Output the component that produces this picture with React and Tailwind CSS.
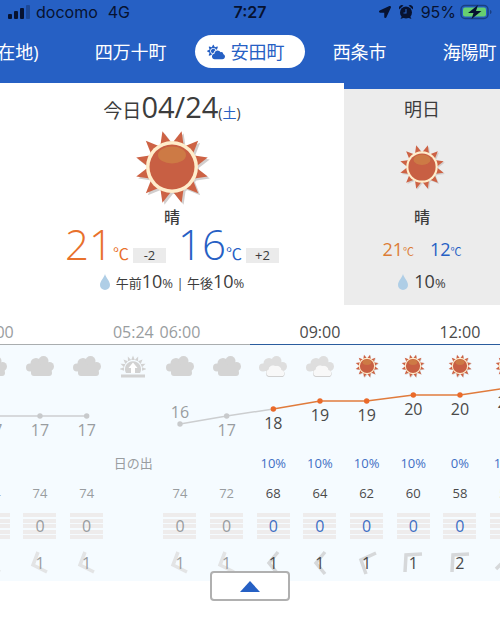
import { FaLocationArrow, FaCloudSun } from 'react-icons/fa';

const WIND = {
  nne: '13,4 8,17 22,24',
  w: '20,4 11,15 20,26',
  wnw: '24,5 9,12 14,26',
  nw: '24,6 8,7 7,24',
  n: '4,21 15,10 26,21',
};

const hours = [
  { time: '03:00', icon: 'cloud', temp: 17, y: 29, humidity: 74, rain: 0, wind: 1, dir: 'nne', past: true },
  { time: '', icon: 'cloud', temp: 17, y: 29, humidity: 74, rain: 0, wind: 1, dir: 'nne', past: true },
  { time: '', icon: 'cloud', temp: 17, y: 29, humidity: 74, rain: 0, wind: 1, dir: 'nne', past: true },
  { time: '05:24', icon: 'sunrise', chance: '日の出', past: true },
  { time: '06:00', icon: 'cloud', temp: 16, y: 37, humidity: 74, rain: 0, wind: 1, dir: 'nne', past: true },
  { time: '', icon: 'cloud', temp: 17, y: 29, humidity: 72, rain: 0, wind: 1, dir: 'nne', past: true },
  { time: '', icon: 'cloudy', temp: 18, y: 22, chance: '10%', humidity: 68, rain: 0, wind: 1, dir: 'w' },
  { time: '09:00', icon: 'cloudy', temp: 19, y: 14, chance: '10%', humidity: 64, rain: 0, wind: 1, dir: 'w' },
  { time: '', icon: 'sun', temp: 19, y: 14, chance: '10%', humidity: 62, rain: 0, wind: 1, dir: 'wnw' },
  { time: '', icon: 'sun', temp: 20, y: 8, chance: '10%', humidity: 60, rain: 0, wind: 1, dir: 'nw' },
  { time: '12:00', icon: 'sun', temp: 20, y: 8, chance: '0%', humidity: 58, rain: 0, wind: 2, dir: 'nw' },
  { time: '', icon: 'sun', temp: 21, y: 1, chance: '10%', humidity: 56, rain: 0, wind: 2, dir: 'n' },
];

const textColor = (hour) => (hour.past ? 'text-[#999da0]' : 'text-[#4a4a4a]');

function Sun({ className }) {
  const rays = Array.from({ length: 12 }, (_, i) => 15 + i * 30);
  return (
    <svg viewBox="-38 -38 76 76" className={className} aria-hidden="true">
      <g transform="translate(2 2)" fill="#d2cecd">
        {rays.map((a) => (
          <polygon key={a} points="0,-37 -6,-23 6,-23" transform={`rotate(${a})`} />
        ))}
        <circle r="25" />
      </g>
      {rays.map((a) => (
        <polygon key={a} points="0,-37 -6,-23 6,-23" fill="#cd6244" transform={`rotate(${a})`} />
      ))}
      <circle r="26" fill="#ffedcb" />
      <circle r="22.5" fill="#c85f43" />
      <ellipse cy="-12" rx="14" ry="8.5" fill="#cd7a45" />
    </svg>
  );
}

function CloudShape() {
  return (
    <>
      <circle cx="4" cy="11.5" r="4" />
      <circle cx="10" cy="7.5" r="5.5" />
      <circle cx="17.5" cy="5" r="5" />
      <circle cx="23.5" cy="10.5" r="4.5" />
      <path d="M5 9H25L26 17a3 3 0 0 1-3 3H8a3 3 0 0 1-3-3z" />
    </>
  );
}

function HourIcon({ name }) {
  if (name === 'sun') return <Sun className="size-6" />;
  if (name === 'sunrise') {
    return (
      <svg viewBox="0 0 26 24" className="h-6 w-[26px]" fill="#d2d2d2">
        {[-90, -67.5, -45, -22.5, 0, 22.5, 45, 67.5, 90].map((a) => (
          <polygon key={a} points="13,1.5 11.2,6 14.8,6" transform={`rotate(${a} 13 15)`} />
        ))}
        <path d="M6 19a8 8 0 1 1 14 0z" />
        <path d="M13 8.5l4.5 5.5h-2.500v5h-4v-5H8.500z" fill="#fff" />
        <rect x="1" y="20.500" width="24" height="3" />
      </svg>
    );
  }
  if (name === 'cloudy') {
    return (
      <svg viewBox="0 0 28 21" className="h-[21px] w-7" fill="#dedede">
        <circle cx="4" cy="11.500" r="4" />
        <circle cx="10" cy="7.500" r="5.500" />
        <circle cx="17.500" cy="5" r="5" />
        <circle cx="23.500" cy="10.500" r="4.500" />
        <path d="M4 9h21v6H4z" />
        <path d="M9.500 21a4 4 0 0 1 0-7.500 4.500 4.500 0 0 1 7-3.500 4.500 4.500 0 0 1 6 4 3.800 3.800 0 0 1 1.500 7z" fill="#d0d0d0" />
        <path d="M9.500 20a3.500 3.500 0 0 1 0-6.500 4.500 4.500 0 0 1 7-3.500 4.500 4.500 0 0 1 6 4 3.300 3.300 0 0 1 1.500 6z" fill="#f8f8f8" />
      </svg>
    );
  }
  return (
    <svg viewBox="0 0 28 21" className="h-[21px] w-7" fill="#d4d4d4">
      <CloudShape />
    </svg>
  );
}

function Drop() {
  return (
    <svg viewBox="0 0 10 16" className="h-4 w-[10px]" aria-hidden="true">
      <path d="M5 0C6 4 10 7 10 11a5 5 0 0 1-10 0C0 7 4 4 5 0z" fill="#afcee6" />
    </svg>
  );
}

function StatusBar() {
  return (
    <div className="grid h-6 grid-cols-3 items-center px-2 font-[Inter,sans-serif] text-[16px] leading-6 text-[#071230]">
      <div className="flex items-center gap-1.5">
        <svg viewBox="0 0 22 14" className="h-[14px] w-[22px]" fill="currentColor">
          <rect x="0" y="9" width="4" height="5" rx="1" />
          <rect x="6" y="6" width="4" height="8" rx="1" />
          <rect x="12" y="3" width="4" height="11" rx="1" />
          <rect x="18" y="0" width="4" height="14" rx="1" opacity="0.3" />
        </svg>
        <span>docomo</span>
        <span className="ml-1">4G</span>
      </div>
      <div className="text-center font-semibold">7:27</div>
      <div className="flex items-center justify-end gap-1">
        <FaLocationArrow className="mr-1 size-3" />
        <svg viewBox="0 0 14 14" className="mr-1 size-[14px]" fill="currentColor">
          <circle cx="7" cy="7.500" r="6" />
          <path d="M0 4.500A3.200 3.200 0 0 1 4.500 0.500zM14 4.500A3.200 3.200 0 0 0 9.500 0.500zM1.500 14l1.500-3 2.500 1.500zM12.500 14l-1.500-3-2.500 1.500z" />
          <path d="M7 4v4H4.500" fill="none" stroke="#2660c4" strokeWidth="1.100" />
        </svg>
        <span>95%</span>
        <svg viewBox="0 0 32 16" className="h-4 w-8">
          <rect x="1" y="1.500" width="27" height="13" rx="4" fill="none" stroke="#193f82" strokeWidth="1.500" />
          <rect x="3" y="3.500" width="23" height="9" rx="2" fill="#66cf70" />
          <path d="M30 6c2 .5 2 3.500 0 4z" fill="#193f82" />
          <path d="M18 1L8 9h5.500l-2 6 10-8h-5.500z" fill="#071230" />
        </svg>
      </div>
    </div>
  );
}

function Tabs() {
  return (
    <nav className="-ml-[54px] flex h-[59px] items-center pb-1 text-[18px] leading-6 whitespace-nowrap text-white">
      <a href="#here" className="shrink-0 px-7">(現在地)</a>
      <a href="#shimanto" className="shrink-0 px-7">四万十町</a>
      <a
        href="#yasuda"
        aria-current="page"
        className="flex h-[33px] shrink-0 items-center gap-1.5 rounded-full bg-white pr-5 pl-3 text-[#2660c4]"
      >
        <FaCloudSun className="size-[18px]" />
        安田町
      </a>
      <a href="#saijo" className="shrink-0 px-7">西条市</a>
      <a href="#kaiyo" className="shrink-0 px-7">海陽町</a>
    </nav>
  );
}

function TodayTemp({ value, diff, className }) {
  return (
    <div className="flex items-baseline">
      <span className={`text-[42px] leading-[30px] font-light ${className}`}>{value}</span>
      <span className={`mr-1 text-[16px] leading-[30px] ${className}`}>℃</span>
      <span className="w-[33px] bg-[#ebebeb] text-center text-[13px] leading-[15px]">{diff}</span>
    </div>
  );
}

function Today() {
  return (
    <section className="flex w-[68.8%] flex-col items-center bg-white pt-1">
      <h2 className="flex h-[42px] items-baseline text-[19px]">
        今日
        <span className="text-[29px] leading-[40px]">04/24</span>
        <span className="text-[14px]">
          (<span className="text-[#2660c4]">土</span>)
        </span>
      </h2>
      <Sun className="size-[76px]" />
      <p className="text-[16px] leading-6 font-medium">晴</p>
      <div className="flex h-10 gap-3">
        <TodayTemp value="21" diff="-2" className="text-[#e8712c]" />
        <TodayTemp value="16" diff="+2" className="text-[#2660c4]" />
      </div>
      <div className="flex items-center gap-1.5 leading-6">
        <Drop />
        <p className="text-[13px]">
          午前<span className="text-[18px]">10</span>% | 午後<span className="text-[18px]">10</span>%
        </p>
      </div>
    </section>
  );
}

function Tomorrow() {
  return (
    <section className="flex flex-1 flex-col items-center border-t-6 border-[#2660c4] bg-[#ececec] pb-2.5">
      <h2 className="text-[18px] leading-10">明日</h2>
      <div className="flex h-[76px] items-center">
        <Sun className="size-[46px]" />
      </div>
      <p className="text-[16px] leading-6 font-medium">晴</p>
      <div className="flex h-10 gap-4 text-[18px] leading-10">
        <p className="text-[#dc7c36]">21<span className="text-[11px]">℃</span></p>
        <p className="text-[#2660c4]">12<span className="text-[11px]">℃</span></p>
      </div>
      <div className="flex items-center gap-1.5 leading-6">
        <Drop />
        <p className="text-[13px]"><span className="text-[18px]">10</span>%</p>
      </div>
    </section>
  );
}

// centre of a column inside the 560 unit wide chart
const columnX = (i) => (i + 0.5) * (560 / hours.length);

function TempChart() {
  return (
    <svg viewBox="0 0 560 58" className="block w-full overflow-visible">
      {hours.slice(1).map((hour, i) => {
        const prev = hours[i];
        if (hour.y === undefined || prev.y === undefined) return null;
        return (
          <line
            key={i}
            x1={columnX(i)}
            y1={prev.y}
            x2={columnX(i + 1)}
            y2={hour.y}
            stroke={prev.past ? '#ccced0' : '#e07b3c'}
            strokeWidth="1.500"
          />
        );
      })}
      {hours.map((hour, i) => hour.y !== undefined && (
        <g key={i}>
          <circle cx={columnX(i)} cy={hour.y} r="2.700" fill={hour.past ? '#c8cacc' : '#ea6a2a'} />
          <text
            x={columnX(i)}
            y={hour.temp === 16 ? hour.y - 6 : hour.y + 20}
            textAnchor="middle"
            fontSize="16"
            fill={hour.past ? '#999da0' : '#4a4a4a'}
          >
            {hour.temp}
          </text>
        </g>
      ))}
    </svg>
  );
}

function Hourly() {
  return (
    <div className="flex justify-center overflow-hidden pt-[15px]">
      <table className="w-[112%] shrink-0 table-fixed border-separate border-spacing-0 text-center">
        <thead>
          <tr>
            {hours.map((hour, i) => (
              <th
                key={i}
                scope="col"
                className={`h-[25px] border-b p-0 text-[16px] leading-6 font-normal ${textColor(hour)} ${hour.past ? 'border-[#a9adaf]' : 'border-[#2a5c9e]'}`}
              >
                <div className="flex justify-center">{hour.time}</div>
              </th>
            ))}
          </tr>
        </thead>
        <tbody className="bg-[#f5fbff]">
          <tr aria-label="天気">
            {hours.map((hour, i) => (
              <td key={i} className="h-[42px] p-0">
                <div className="flex justify-center"><HourIcon name={hour.icon} /></div>
              </td>
            ))}
          </tr>
          <tr aria-label="気温">
            <td colSpan={hours.length} className="p-0"><TempChart /></td>
          </tr>
          <tr aria-label="降水確率">
            {hours.map((hour, i) => (
              <td key={i} className={`h-[38px] p-0 text-[13px] ${hour.past ? 'text-[#999da0]' : 'text-[#3f6fc4]'}`}>
                {hour.chance}
              </td>
            ))}
          </tr>
          <tr aria-label="湿度">
            {hours.map((hour, i) => (
              <td key={i} className={`h-5 p-0 text-[13px] leading-5 ${textColor(hour)}`}>{hour.humidity}</td>
            ))}
          </tr>
          <tr aria-label="降水量">
            {hours.map((hour, i) => (
              <td key={i} className="h-[46px] p-0">
                {hour.rain !== undefined && (
                  <div className={`mx-auto grid h-[26px] w-[33px] items-center text-[16px] leading-none ${hour.past ? 'text-[#999da0]' : 'text-[#3f6fc4]'}`}>
                    <div className="col-start-1 row-start-1 flex h-full flex-col justify-between">
                      <i className="h-1 bg-[#eeecec]" />
                      <i className="h-1 bg-[#eeecec]" />
                      <i className="h-1 bg-[#eeecec]" />
                      <i className="h-1 bg-[#eeecec]" />
                      <i className="h-1 bg-[#eeecec]" />
                    </div>
                    <span className="z-10 col-start-1 row-start-1">{hour.rain}</span>
                  </div>
                )}
              </td>
            ))}
          </tr>
          <tr aria-label="風">
            {hours.map((hour, i) => (
              <td key={i} className={`h-8 p-0 pb-1 text-[16px] leading-none ${textColor(hour)}`}>
                {hour.dir && (
                  <div className="grid place-items-center">
                    <svg viewBox="1 1 28 28" className="col-start-1 row-start-1 size-7">
                      <polyline
                        points={WIND[hour.dir]}
                        fill="none"
                        stroke={hour.past ? '#e3e4e5' : '#d6d8da'}
                        strokeWidth="3.500"
                      />
                    </svg>
                    <span className="z-10 col-start-1 row-start-1">{hour.wind}</span>
                  </div>
                )}
              </td>
            ))}
          </tr>
        </tbody>
      </table>
    </div>
  );
}

export default function App() {
  return (
    <div className="min-h-screen overflow-hidden bg-white font-['Open_Sans','Noto_Sans_CJK_JP',sans-serif] text-[#3c3c3c]">
      <header className="overflow-hidden bg-[#2660c4]">
        <StatusBar />
        <Tabs />
      </header>
      <main>
        <div className="flex">
          <Today />
          <Tomorrow />
        </div>
        <Hourly />
        <button
          type="button"
          aria-label="閉じる"
          className="relative mx-auto -mt-2.5 flex h-[30px] w-20 items-center justify-center rounded-sm border-2 border-[#b0b0b0] bg-white"
        >
          <svg viewBox="0 0 20 11" className="h-[11px] w-5">
            <polygon points="10,0 20,11 0,11" fill="#2660c4" />
          </svg>
        </button>
      </main>
    </div>
  );
}
